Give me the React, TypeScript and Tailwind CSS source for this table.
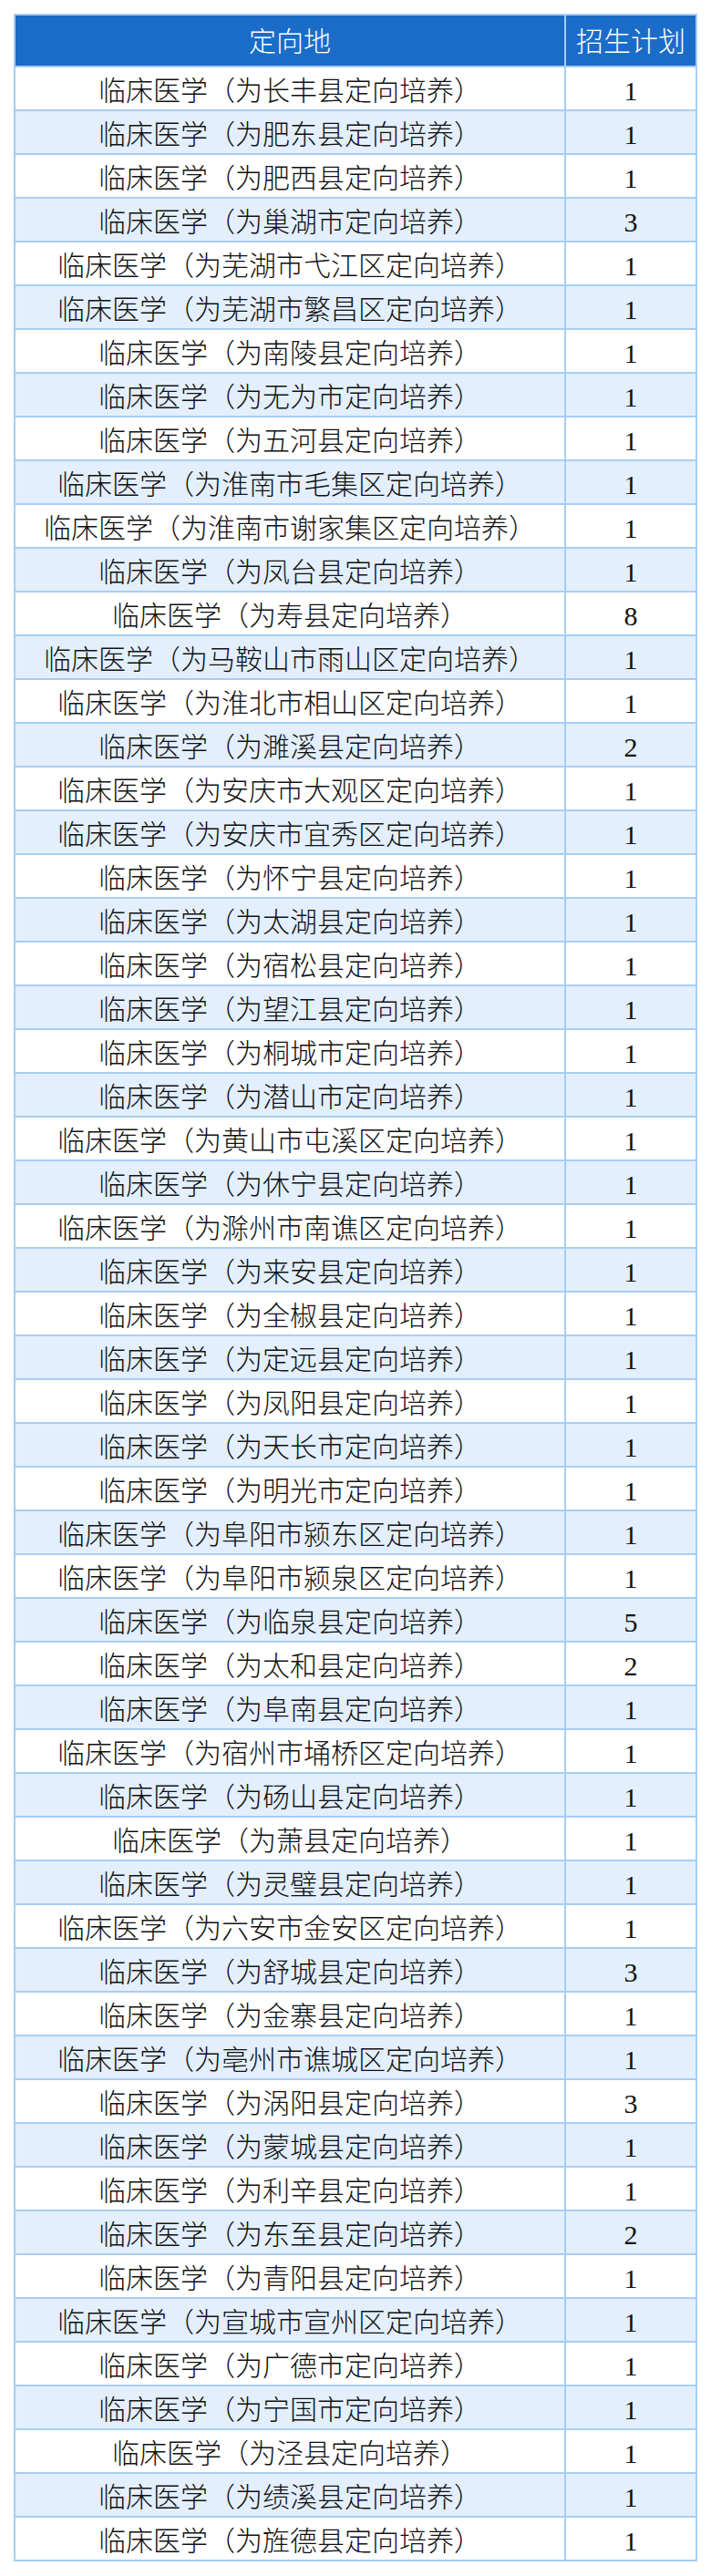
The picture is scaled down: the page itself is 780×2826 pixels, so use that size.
const rows: [string, number][] = [
  ["长丰县", 1],
  ["肥东县", 1],
  ["肥西县", 1],
  ["巢湖市", 3],
  ["芜湖市弋江区", 1],
  ["芜湖市繁昌区", 1],
  ["南陵县", 1],
  ["无为市", 1],
  ["五河县", 1],
  ["淮南市毛集区", 1],
  ["淮南市谢家集区", 1],
  ["凤台县", 1],
  ["寿县", 8],
  ["马鞍山市雨山区", 1],
  ["淮北市相山区", 1],
  ["濉溪县", 2],
  ["安庆市大观区", 1],
  ["安庆市宜秀区", 1],
  ["怀宁县", 1],
  ["太湖县", 1],
  ["宿松县", 1],
  ["望江县", 1],
  ["桐城市", 1],
  ["潜山市", 1],
  ["黄山市屯溪区", 1],
  ["休宁县", 1],
  ["滁州市南谯区", 1],
  ["来安县", 1],
  ["全椒县", 1],
  ["定远县", 1],
  ["凤阳县", 1],
  ["天长市", 1],
  ["明光市", 1],
  ["阜阳市颍东区", 1],
  ["阜阳市颍泉区", 1],
  ["临泉县", 5],
  ["太和县", 2],
  ["阜南县", 1],
  ["宿州市埇桥区", 1],
  ["砀山县", 1],
  ["萧县", 1],
  ["灵璧县", 1],
  ["六安市金安区", 1],
  ["舒城县", 3],
  ["金寨县", 1],
  ["亳州市谯城区", 1],
  ["涡阳县", 3],
  ["蒙城县", 1],
  ["利辛县", 1],
  ["东至县", 2],
  ["青阳县", 1],
  ["宣城市宣州区", 1],
  ["广德市", 1],
  ["宁国市", 1],
  ["泾县", 1],
  ["绩溪县", 1],
  ["旌德县", 1],
]

export default function App() {
  return (
    <div
      className="min-h-[2826px] bg-white pt-[15px] pl-[15px]"
      style={{ fontFamily: '"Liberation Serif", "Noto Sans CJK SC", serif' }}
    >
      <div className="w-[750px] border-2 border-[#a8cdf3]">
        {/* header */}
        <div className="grid grid-cols-[604px_1fr] h-[57px] border-b-2 border-[#a8cdf3] bg-[#1b6cc9] text-white text-[30px] font-light">
          <div className="flex items-center justify-center border-r-2 border-[#a8cdf3] pt-[2px]">定向地</div>
          <div className="flex items-center justify-center pt-[2px]">招生计划</div>
        </div>

        {rows.map(([place, n], i) => {
          const last = i === rows.length - 1
          return (
            <div
              key={place}
              className={
                "grid grid-cols-[604px_1fr] text-[#111] text-[30px] font-light " +
                (last ? "h-[46px] " : "h-[48px] border-b-2 border-[#a8cdf3] ") +
                (i % 2 === 1 ? "bg-[#e3effd]" : "bg-white")
              }
            >
              <div className="flex items-center justify-center border-r-2 border-[#a8cdf3] pt-[3px]">
                临床医学（为{place}定向培养）
              </div>
              <div className="flex items-center justify-center pt-[3px]">{n}</div>
            </div>
          )
        })}
      </div>
    </div>
  )
}
